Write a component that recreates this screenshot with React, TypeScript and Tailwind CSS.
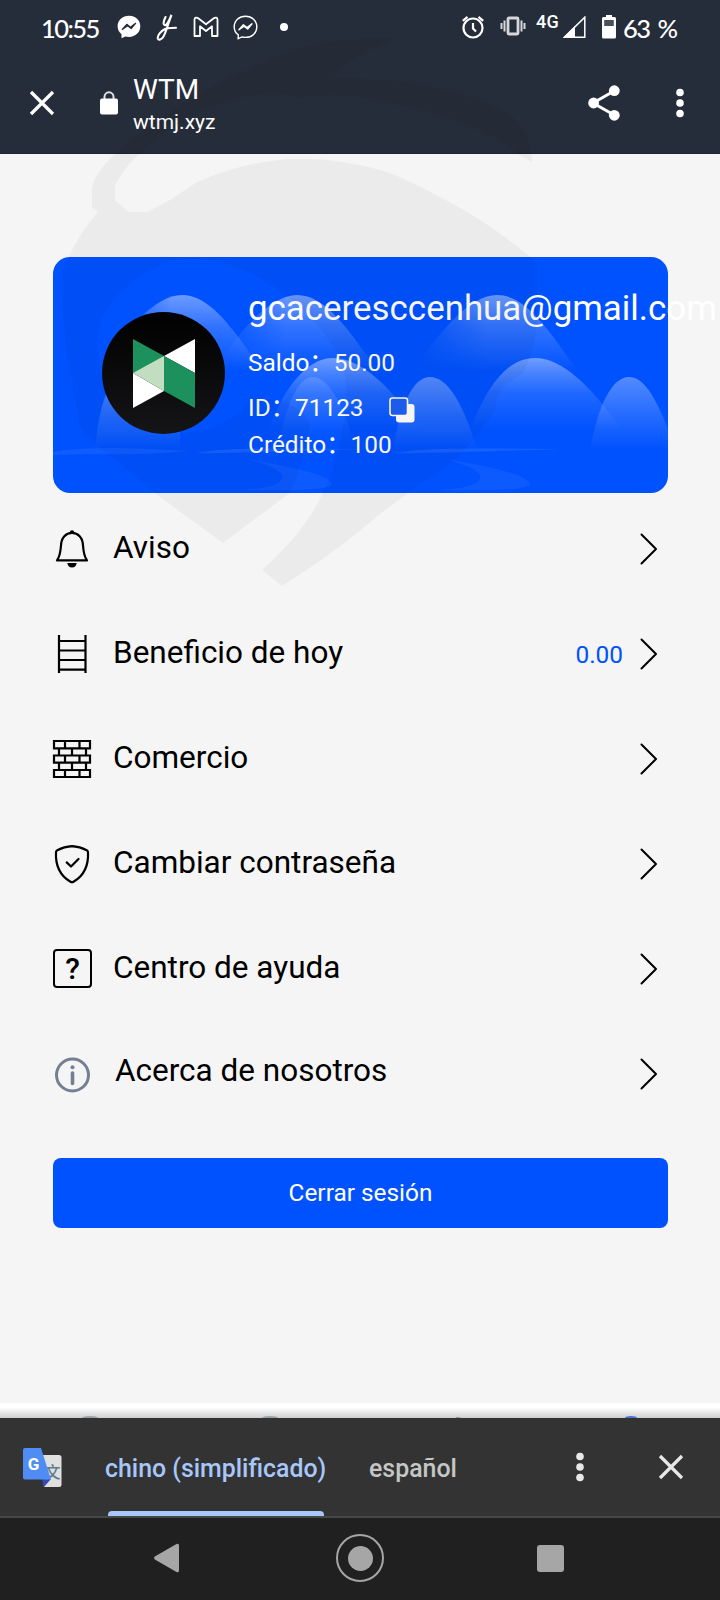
import React from "react";

type MenuItem = { label: string; icon: React.ReactNode; value?: string };

const BellIcon = () => (
  <svg width="40" height="40" viewBox="0 0 40 40" fill="none" stroke="#000" strokeWidth="2.200">
    <path d="M5 31.4H35C32.4 28 31.5 23 31 16.5C30.7 8.500 26 3.800 20 3.800S9.300 8.500 9 16.500C8.500 23 7.600 28 5 31.400Z" strokeLinejoin="round" />
    <path d="M17.800 3.500A2.200 2.200 0 0 1 22.200 3.500Z" fill="#000" stroke="none" />
    <path d="M15.300 34H24.700C24.200 37 22.500 38.600 20 38.600S15.800 37 15.300 34Z" fill="#000" stroke="none" />
  </svg>
);

const LadderIcon = () => (
  <svg width="40" height="40" viewBox="0 0 40 40" fill="none" stroke="#000" strokeWidth="2.200">
    <path d="M7 1V39M33.500 1V39M7 7H33.500M7 16.500H33.500M7 26H33.500M7 35.700H33.500" />
  </svg>
);

const BricksIcon = () => (
  <svg width="40" height="40" viewBox="0 0 40 40" fill="none" stroke="#000" strokeWidth="2.200">
    <path d="M2 2H38V9.300H2ZM2 16.500H38V23.700H2ZM2 31H38V38H2Z" />
    <path d="M13 2V9.300M27.500 2V9.300M13 16.500V23.700M27.500 16.500V23.700M13 31V38M27.500 31V38" />
    <path d="M7 9.300V16.500M20 9.300V16.500M34 9.300V16.500M7 23.700V31M20 23.700V31M34 23.700V31" />
  </svg>
);

const ShieldIcon = () => (
  <svg width="40" height="40" viewBox="0 0 40 40" fill="none" stroke="#000" strokeWidth="2.200" strokeLinejoin="round" strokeLinecap="round">
    <path d="M20 2.200C14.500 2.500 9.500 4 5.300 6.200C4.300 6.700 4 7.200 4 8.200C3.300 21 8 31.500 18.500 37.800C19.500 38.400 20.500 38.400 21.500 37.800C32 31.500 36.700 21 36 8.200C36 7.200 35.700 6.700 34.700 6.200C30.500 4 25.500 2.500 20 2.200Z" />
    <path d="M14.700 18.400L19 22.500L26.500 15" />
  </svg>
);

const HelpIcon = () => (
  <div className="ml-px flex h-[39px] w-[39px] items-center justify-center rounded-[4px] border-2 border-black text-[30px] leading-none font-medium">
    ?
  </div>
);

const InfoIcon = () => (
  <svg className="mt-[3px]" width="40" height="40" viewBox="0 0 40 40" fill="none" stroke="#757f93" strokeWidth="3">
    <circle cx="20.500" cy="20" r="16" />
    <path d="M20.500 18V28.500" strokeWidth="3.600" strokeLinecap="round" />
    <circle cx="20.500" cy="12.200" r="2" fill="#757f93" stroke="none" />
  </svg>
);

const Close = ({ color }: { color: string }) => (
  <svg width="26" height="26" viewBox="0 0 26 26" fill="none" stroke={color} strokeWidth="3.200">
    <path d="M2 2L24 24M24 2L2 24" />
  </svg>
);

const Dots = ({ color }: { color: string }) => (
  <svg width="8" height="30" viewBox="0 0 8 30" fill={color}>
    <circle cx="4" cy="4.500" r="3.800" />
    <circle cx="4" cy="15" r="3.800" />
    <circle cx="4" cy="25.500" r="3.800" />
  </svg>
);

const menu: MenuItem[] = [
  { label: "Aviso", icon: <BellIcon /> },
  { label: "Beneficio de hoy", icon: <LadderIcon />, value: "0.00" },
  { label: "Comercio", icon: <BricksIcon /> },
  { label: "Cambiar contraseña", icon: <ShieldIcon /> },
  { label: "Centro de ayuda", icon: <HelpIcon /> },
  { label: "Acerca de nosotros", icon: <InfoIcon /> },
];

const StatusBar = () => (
  <div className="flex h-[54px] items-center pl-[41px] text-white">
    <span className="mt-[4px] w-[76px] font-['Lato'] text-[25.5px] leading-none font-medium tracking-[-1.6px]">10:55</span>
    <svg width="24" height="24" viewBox="0 0 24 24">
      <path d="M12 .8C5.500 .8 .6 5.300 .6 11.300C.6 14.500 2 17.300 4.500 19.200V23.200L8.400 21.400C9.500 21.700 10.700 21.900 12 21.900C18.500 21.900 23.300 17.300 23.300 11.300S18.500 .8 12 .8Z" fill="#fff" />
      <path d="M5.200 14.500L9.800 9.300L13.400 12.200L18.600 8.300L14.200 13.600L10.600 10.800Z" fill="#262d3a" stroke="#262d3a" strokeWidth="1.200" strokeLinejoin="round" />
    </svg>
    <svg className="ml-[15px]" width="22" height="28" viewBox="0 0 22 28" fill="none" stroke="#fff" strokeWidth="2.100" strokeLinecap="round">
      <path d="M9.500 4C7.500 8 6.800 12 8.800 12.300C11 12.500 13 8 15.500 2C12.500 9 10.500 18 7.500 23.500C5.500 27 2.500 27.500 1.800 25.500C1.200 22.500 5 18 9 16C12 14.600 15 15.200 20 14.800" />
    </svg>
    <svg className="ml-[15px]" width="26" height="22" viewBox="0 0 26 22" fill="none" stroke="#fff" strokeWidth="1.800" strokeLinejoin="round">
      <path d="M1.500 3.500C1.500 1.500 3.500 1 5.200 2.300L13 8.300L20.800 2.300C22.500 1 24.500 1.500 24.500 3.500V20H19V10.300L13 15L7 10.300V20H1.500Z" />
    </svg>
    <svg className="ml-[14px]" width="25" height="25" viewBox="0 0 25 25" fill="none" stroke="#fff" strokeWidth="1.400">
      <path d="M12.500 1.200C6 1.200 1.200 5.700 1.200 11.900C1.200 15 2.600 17.800 5.200 19.700V23.600L9 21.900C10 22.200 11.300 22.400 12.500 22.400C19 22.400 23.800 17.900 23.800 11.900S19 1.200 12.500 1.200Z" />
      <path d="M6 14.800L10.300 9.800L14 12.600L19 8.800L14.700 14L11 11.200Z" fill="#fff" strokeLinejoin="round" />
    </svg>
    <span className="ml-[22px] h-[8px] w-[8px] rounded-full bg-white" />
    <svg className="ml-[173px]" width="24" height="24" viewBox="0 0 24 24" fill="none" stroke="#fff" strokeWidth="2.200">
      <circle cx="12" cy="13" r="9.500" />
      <path d="M12 8V13.500L15 16.500M1.800 5.800L6.500 1.800M22.200 5.800L17.500 1.800" />
    </svg>
    <svg className="mb-[2px] ml-[15px]" width="26" height="20" viewBox="0 0 26 20" fill="none" stroke="#d5d7da" strokeWidth="2">
      <rect x="8" y="2" width="10" height="16" rx="1" strokeWidth="2.800" />
      <path d="M4.500 4.500V15.500M21.500 4.500V15.500M1.500 7V13M24.500 7V13" />
    </svg>
    <span className="mb-[11px] ml-[10px] w-[27px] text-[18px] leading-none font-medium tracking-[.3px]">4G</span>
    <svg width="23" height="22" viewBox="0 0 23 22">
      <path d="M1.500 21.200H21.800V1.200Z" fill="none" stroke="#fff" strokeWidth="1.500" />
      <path d="M0 22H12V10Z" fill="#fff" />
    </svg>
    <svg className="ml-[16px]" width="14" height="24" viewBox="0 0 14 24">
      <path d="M4 0H10V2H12.500Q14 2 14 3.500V22Q14 23.500 12.500 23.500H1.500Q0 23.500 0 22V3.500Q0 2 1.500 2H4Z" fill="#fff" />
      <rect x="2.200" y="5" width="9.600" height="6" fill="#4b515c" />
    </svg>
    <span className="mt-[4px] ml-[7px] font-['Lato'] text-[25.5px] leading-none font-medium tracking-[-1.5px] whitespace-nowrap [word-spacing:3px]">63 %</span>
  </div>
);

const BrowserBar = () => (
  <div className="flex h-[98px] items-center pl-[29px] text-white">
    <Close color="#fff" />
    <svg className="ml-[45px]" width="18" height="24" viewBox="0 0 18 24">
      <path d="M4.500 9V5.800A4.500 4.500 0 0 1 13.500 5.800V9" fill="none" stroke="#dfe1e4" strokeWidth="2" />
      <rect y="7.500" width="18" height="16" rx="2" fill="#fff" />
    </svg>
    <div className="mt-[5px] ml-[15px] w-[440px]">
      <p className="text-[28px] leading-[33px]">WTM</p>
      <p className="text-[21px] leading-[32px]">wtmj.xyz</p>
    </div>
    <svg className="ml-[15px]" width="32" height="36" viewBox="0 0 32 36" fill="#fff">
      <path d="M27 5.500L5 18L27 30.500" fill="none" stroke="#fff" strokeWidth="3" />
      <circle cx="26.300" cy="5.700" r="5.400" />
      <circle cx="5.600" cy="18" r="5.400" />
      <circle cx="26.300" cy="30.300" r="5.400" />
    </svg>
    <div className="ml-[56px]">
      <Dots color="#fff" />
    </div>
  </div>
);

// hills and water behind the account data
const CardArt = () => (
  <svg className="absolute inset-0 rounded-[17px]" width="615" height="236" viewBox="53 257 615 236">
    <defs>
      <linearGradient id="high" gradientUnits="userSpaceOnUse" x1="0" y1="295" x2="0" y2="372">
        <stop offset="0" stopColor="#fff" stopOpacity=".42" />
        <stop offset=".4" stopColor="#fff" stopOpacity=".2" />
        <stop offset="1" stopColor="#fff" stopOpacity="0" />
      </linearGradient>
      <linearGradient id="low" gradientUnits="userSpaceOnUse" x1="0" y1="358" x2="0" y2="430">
        <stop offset="0" stopColor="#fff" stopOpacity=".4" />
        <stop offset=".5" stopColor="#fff" stopOpacity=".12" />
        <stop offset="1" stopColor="#fff" stopOpacity="0" />
      </linearGradient>
      <linearGradient id="small" gradientUnits="userSpaceOnUse" x1="0" y1="377" x2="0" y2="450">
        <stop offset="0" stopColor="#fff" stopOpacity=".33" />
        <stop offset=".5" stopColor="#fff" stopOpacity=".15" />
        <stop offset="1" stopColor="#fff" stopOpacity="0" />
      </linearGradient>
      {/* the tall hills also fade out towards their left foot */}
      <linearGradient id="side" x1="0" y1="0" x2="1" y2="0">
        <stop offset="0" stopColor="#000" />
        <stop offset=".45" stopColor="#fff" />
      </linearGradient>
      <mask id="fade" maskContentUnits="objectBoundingBox">
        <rect width="1" height="1" fill="url(#side)" />
      </mask>
      <path id="hill" d="M410 375C440 330 470 295 497 295C525 295 548 328 580 375Z" fill="url(#high)" mask="url(#fade)" />
      <g id="water" fill="#fff">
        <path d="M443 458C470 466 483 472 480 479C476 487 455 489 440 490C490 491 532 490 530 483C524 472 470 464 443 458Z" fillOpacity=".05" />
        <path d="M395 453C420 448 470 447.500 560 449.500C490 450.500 430 454 395 453Z" fillOpacity=".09" />
      </g>
    </defs>
    <rect x="53" y="257" width="615" height="236" fill="#0052ff" />
    <use href="#hill" x="-315" />
    <use href="#hill" x="-200" />
    <use href="#hill" />
    <path d="M268 430C285 385 308 358 333 358C360 358 390 385 420 430Z" fill="url(#low)" />
    <path d="M470 430C487 385 508 358 535 358C562 358 590 385 622 430Z" fill="url(#low)" />
    <path d="M278 450C285 405 298 377 313 377C328 377 345 405 355 450Z" fill="url(#small)" fillOpacity=".4" />
    <path d="M393 450C400 405 413 377 430 377C447 377 463 402 477 450Z" fill="url(#small)" />
    <path d="M590 450C598 405 612 377 629 377C644 377 657 398 672 440V450Z" fill="url(#small)" />
    <path d="M95 450C97 425 102 400 110 385H180V450Z" fill="url(#small)" />
    <use href="#water" />
    <use href="#water" x="-198" />
    <path d="M53 452C90 446 130 448 190 451C140 456 100 453 53 455Z" fill="#fff" fillOpacity=".06" />
  </svg>
);

const AccountCard = () => (
  <section className="relative h-[236px] w-[615px]">
    <CardArt />
    <div className="relative flex h-full pl-[49px] text-white">
      <svg className="mt-[55px] shrink-0" width="123" height="122" viewBox="0 0 123 122">
        <defs>
          <linearGradient id="disc" x1="0" y1="0" x2="0" y2="1">
            <stop offset="0" stopColor="#000" />
            <stop offset="1" stopColor="#151518" />
          </linearGradient>
        </defs>
        <ellipse cx="61.500" cy="61" rx="61.500" ry="61" fill="url(#disc)" />
        <path d="M31 27L62 44V61L31 61Z" fill="#1d915d" />
        <path d="M93 27V61L62 44Z" fill="#fff" />
        <path d="M62 44L93 61V96L62 79Z" fill="#1d915d" />
        <path d="M31 61L62 79L31 96Z" fill="#fff" />
        <path d="M62 44V79L31 61Z" fill="#c2ddc0" />
      </svg>
      <div className="ml-[23px] flex w-0 flex-col items-start pt-[29px] text-[24.4px] whitespace-nowrap">
        <p className="h-[57px] text-[34.9px] leading-[45px]">gcaceresccenhua@gmail.com</p>
        <p className="h-[45px] leading-[40px]">Saldo：50.00</p>
        <p className="flex h-[37px] items-start leading-[40px]">
          ID：71123
          <svg className="mt-[9px] ml-[25px]" width="26" height="26" viewBox="0 0 26 26">
            <rect x="7" y="7" width="18.500" height="18.500" rx="3" fill="#fff" />
            <rect x="1" y="1" width="17.500" height="17.500" rx="2.500" fill="#1f5ff5" stroke="#fff" strokeWidth="1.600" />
          </svg>
        </p>
        <p className="leading-[40px]">Crédito：100</p>
      </div>
    </div>
  </section>
);

const Watermark = () => (
  <svg className="pointer-events-none absolute top-0 left-0" width="720" height="600" viewBox="0 0 720 600" fill="#000" fillOpacity=".04">
    <path d="M395 38C350 38 320 42 298 49C255 65 228 78 207 90C180 103 138 132 115 154C100 168 92 180 92 190V208L98 212C82 230 74 245 69 257C63 268 60 282 61 290C64 330 66 350 70 372C76 400 78 420 80 427C90 440 100 448 112 457L156 494L223 543L290 493C302 465 308 440 310 425C306 405 270 395 250 400C235 425 200 434 160 434C120 434 98 390 97 340C97 310 125 280 168 262C215 250 265 275 300 307C335 340 350 370 346 405C342 440 332 475 323 493C310 520 290 545 262 570L282 586C320 562 350 540 380 514L412 490C435 475 450 465 465 450L496 410V400L505 385L523 373L533 350L537 325V262L505 237C480 218 440 195 395 175C360 162 320 158 289 159C250 162 220 172 197 182L170 200L147 212H129L115 200V186C120 175 128 165 138 155C165 128 200 110 239 98C265 92 282 90 298 98C340 90 380 100 400 106C420 108 440 114 459 122C480 130 505 140 519 155L532 162C531 140 525 130 514 118C500 108 485 102 459 94C430 84 400 80 367 79C350 78 338 78 333 76C345 60 370 50 395 38Z" />
  </svg>
);

const TranslateBar = () => (
  <div className="relative flex h-[100px] items-center border-b-2 border-[#474747] bg-[#333333] pl-[23px] text-[24.9px] font-medium">
    <svg width="39" height="39" viewBox="0 0 39 39">
      <path d="M18 7H36Q38.500 7 38.500 9.500V36.500Q38.500 39 36 39H21Z" fill="#e0e0e0" />
      <path d="M19 31H28L21 39Z" fill="#3748b5" />
      <text x="21.500" y="29.500" fill="#607d8b" fontFamily="Noto Sans CJK SC" fontSize="16">文</text>
      <path d="M2 0H18L28 31.500H2Q0 31.500 0 29.500V2Q0 0 2 0Z" fill="#4f8df5" />
      <text x="4.800" y="21.500" fill="#fff" fontFamily="Roboto" fontWeight="700" fontSize="17">G</text>
    </svg>
    <span className="mt-[3px] ml-[43px] w-[264px] text-[#a8c7fa]">chino (simplificado)</span>
    <span className="mt-[3px] w-[207px] text-[#c4c7c5]">español</span>
    <Dots color="#e8e8e8" />
    <div className="ml-[74px]">
      <Close color="#e8e8e8" />
    </div>
    <span className="absolute bottom-0 left-[108px] h-[5px] w-[216px] rounded-t-[4px] bg-[#a8c7fa]" />
  </div>
);

const NavBar = () => (
  <div className="flex h-[82px] items-center bg-[#202020] pb-[2px] pl-[154px]">
    <svg width="26" height="30" viewBox="0 0 26 30" fill="#a6a6a6">
      <path d="M.8 13.600L22.500 1Q25 0 25 2.500V27.500Q25 30 22.500 29L.8 16.400Q-.6 15 .8 13.600Z" />
    </svg>
    <div className="ml-[156px] flex h-[48px] w-[48px] items-center justify-center rounded-full border-2 border-[#a6a6a6]">
      <span className="h-[25px] w-[25px] rounded-full bg-[#a6a6a6]" />
    </div>
    <span className="ml-[153px] h-[27px] w-[27px] rounded-[3px] bg-[#a6a6a6]" />
  </div>
);

const App: React.FC = () => {
  return (
    <div className="relative flex h-[1600px] w-[720px] flex-col overflow-hidden bg-[#f5f5f5] font-['Roboto','Noto_Sans_CJK_SC',sans-serif] text-black">
      <header className="h-[154px] shrink-0 border-b border-[#1d2532] bg-[#262d3a]">
        <StatusBar />
        <BrowserBar />
      </header>

      <main className="h-[1249px] shrink-0 pt-[103px] pr-[52px] pl-[53px]">
        <AccountCard />
        <ul className="pt-[3px]">
          {menu.map((item, i) => (
            <li key={item.label} className="flex h-[105px] items-center">
              <div className="-ml-px flex w-[61px] shrink-0">{item.icon}</div>
              <span className={i === 5 ? "mb-[5px] ml-[2px] text-[31.5px]" : "mb-[1px] text-[31.5px]"}>{item.label}</span>
              {item.value && <span className="mt-[3px] ml-auto text-[24.4px] text-[#0052ff]">{item.value}</span>}
              <svg
                className={item.value ? "mr-[10px] ml-[16px]" : "mr-[10px] ml-auto"}
                width="19"
                height="32"
                viewBox="0 0 19 32"
                fill="none"
                stroke="#000"
                strokeWidth="2"
                strokeLinecap="round"
                strokeLinejoin="round"
              >
                <path d="M2.500 1.500L17 16L2.500 30.500" />
              </svg>
            </li>
          ))}
        </ul>
        <button className="mt-[32px] block h-[70px] w-full rounded-[8px] bg-[#0052ff] text-[24.4px] text-white">Cerrar sesión</button>
      </main>

      {/* top edge of the tab bar, hidden by the translate bar */}
      <div className="flex h-[15px] shrink-0 items-end bg-linear-to-b from-white from-30% to-[#cfcfcf]">
        <span className="ml-[82px] h-[2px] w-[16px] rounded-[50%_50%_0_0/100%_100%_0_0] bg-[#9aa3a8]" />
        <span className="ml-[164px] h-[2px] w-[16px] rounded-[50%_50%_0_0/100%_100%_0_0] bg-[#9aa3a8]" />
        <span className="ml-[178px] h-px w-[4px] bg-[#9a9a9a]" />
        <span className="ml-[165px] h-[2px] w-[12px] rounded-[50%_50%_0_0/100%_100%_0_0] bg-[#4a73d6]" />
      </div>
      <TranslateBar />
      <NavBar />
      <Watermark />
    </div>
  );
};

export default App;
